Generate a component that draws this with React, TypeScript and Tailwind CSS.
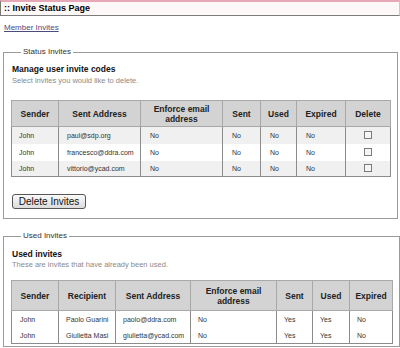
import React from "react";

type Col = { label: React.ReactNode; width: number };

const statusCols: Col[] = [
  { label: "Sender", width: 47 },
  { label: "Sent Address", width: 82 },
  { label: (<>Enforce email<br />address</>), width: 82 },
  { label: "Sent", width: 38 },
  { label: "Used", width: 36 },
  { label: "Expired", width: 49 },
  { label: "Delete", width: 45 },
];

const usedCols: Col[] = [
  { label: "Sender", width: 47 },
  { label: "Recipient", width: 57 },
  { label: "Sent Address", width: 75 },
  { label: (<>Enforce email<br />address</>), width: 86 },
  { label: "Sent", width: 36 },
  { label: "Used", width: 37 },
  { label: "Expired", width: 43 },
];

const statusRows = [
  ["John", "paul@sdp.org", "No", "No", "No", "No"],
  ["John", "francesco@ddra.com", "No", "No", "No", "No"],
  ["John", "vittorio@ycad.com", "No", "No", "No", "No"],
];

const usedRows = [
  ["John", "Paolo Guarini", "paolo@ddra.com", "No", "Yes", "Yes", "No"],
  ["John", "Giulietta Masi", "giulietta@ycad.com", "No", "Yes", "Yes", "No"],
];

function Head({ cols, h }: { cols: Col[]; h: string }) {
  return (
    <thead>
      <tr className={h}>
        {cols.map((c, i) => (
          <th
            key={i}
            className="border border-[#a8a8a8] bg-[#d3d3d3] text-[8.5px] font-bold leading-[10px] text-[#222] text-center p-0"
          >
            {c.label}
          </th>
        ))}
      </tr>
    </thead>
  );
}

function Checkbox() {
  return (
    <span className="inline-block w-[8px] h-[8px] border border-[#7a7a7a] bg-[#f6f6f6] align-middle" />
  );
}

export default function App() {
  return (
    <div className="w-[400px] h-[348px] overflow-hidden bg-white font-['Liberation_Sans',Arial,sans-serif] text-[7px] leading-none text-[#222]">
      <div className="h-[16px] border-t-2 border-t-[#e6a8b7] border-b border-b-[#7c7c7c] border-l border-l-[#777] border-r border-r-[#c9c9c9] bg-[#fff8f8] flex items-center pl-[3px]">
        <span className="text-[9px] font-bold leading-none text-black">:: Invite Status Page</span>
      </div>

      <div className="mt-[7px] pl-[4px] h-[10px] leading-[10px]">
        <a href="#" className="text-[8px] text-[#4b4b7d] underline">Member Invites</a>
      </div>

      <fieldset className="mt-[14px] mx-[3px] border border-[#9a9a9a] pl-[7px] pr-[6px] pb-[9px]">
        <legend className="ml-[10px] px-[2px] text-[8px] leading-[10px] text-[#333]">Status Invites</legend>
        <div className="mt-[7px] pl-[1px] text-[8.5px] font-bold leading-[10px] text-[#111]">Manage user invite codes</div>
        <div className="mt-[3px] pl-[1px] text-[7.5px] leading-[8px] text-[#8a8a8a]">Select invites you would like to delete.</div>
        <table className="mt-[15px] table-fixed border-collapse border border-[#8c8c8c] w-[379px]">
          <colgroup>
            {statusCols.map((c, i) => (
              <col key={i} style={{ width: c.width }} />
            ))}
          </colgroup>
          <Head cols={statusCols} h="h-[26px]" />
          <tbody>
            {statusRows.map((r, i) => (
              <tr key={i} className={i === 2 ? "h-[16px]" : "h-[17px]"}>
                {r.map((v, j) => (
                  <td
                    key={j}
                    className={`border-x border-[#8c8c8c] text-[7px] leading-none text-[#333] p-0 ${j === 0 ? "pl-[7px]" : j === 1 ? "pl-[8px]" : "pl-[9px]"} ${i % 2 === 0 ? "bg-[#f0f0f0]" : "bg-white"}`}
                  >
                    {v}
                  </td>
                ))}
                <td className={`border-x border-[#8c8c8c] text-center text-[7px] leading-none p-0 ${i % 2 === 0 ? "bg-[#f0f0f0]" : "bg-white"}`}>
                  <Checkbox />
                </td>
              </tr>
            ))}
          </tbody>
        </table>
        <button className="mt-[17px] ml-[1px] w-[74px] h-[15px] rounded-[3px] border border-[#555] bg-gradient-to-b from-[#fafafa] to-[#dcdcdc] text-[10px] leading-none text-[#111] flex items-center justify-center">
          Delete Invites
        </button>
      </fieldset>

      <fieldset className="mt-[12px] ml-[3px] mr-[5px] border border-[#9a9a9a] pl-[7px] pr-[6px] pb-[2px]">
        <legend className="ml-[10px] px-[2px] text-[8px] leading-[10px] text-[#333]">Used Invites</legend>
        <div className="mt-[8px] pl-[1px] text-[8.5px] font-bold leading-[10px] text-[#111]">Used invites</div>
        <div className="mt-[2px] pl-[1px] text-[7.5px] leading-[8px] text-[#8a8a8a]">These are invites that have already been used.</div>
        <table className="mt-[11px] table-fixed border-collapse border border-[#8c8c8c] w-[381px]">
          <colgroup>
            {usedCols.map((c, i) => (
              <col key={i} style={{ width: c.width }} />
            ))}
          </colgroup>
          <Head cols={usedCols} h="h-[30px]" />
          <tbody>
            {usedRows.map((r, i) => (
              <tr key={i} className={i === 1 ? "h-[16px]" : "h-[17px]"}>
                {r.map((v, j) => (
                  <td
                    key={j}
                    className={`border-x border-[#8c8c8c] text-[7px] leading-none text-[#333] p-0 bg-white ${j === 0 ? "pl-[8px]" : "pl-[7px]"}`}
                  >
                    {v}
                  </td>
                ))}
              </tr>
            ))}
          </tbody>
        </table>
      </fieldset>
    </div>
  );
}
